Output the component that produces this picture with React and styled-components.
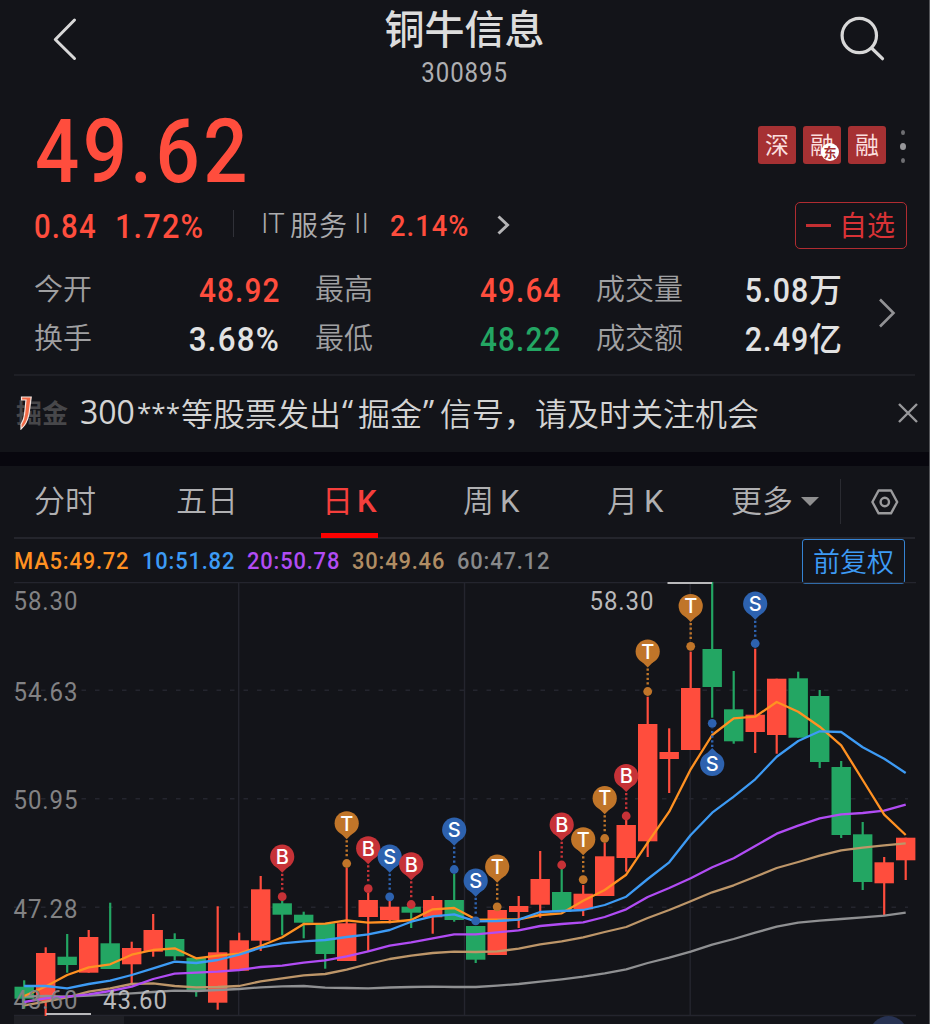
import React from "react";
import styled, { createGlobalStyle } from "styled-components";

const NUM = `Roboto, "Noto Sans CJK SC", sans-serif`;
const CJK = `"Noto Sans CJK SC", sans-serif`;
const RED = "#ff4d3d";
const GREEN = "#23a663";

const Global = createGlobalStyle`
  * { box-sizing: border-box; }
  html, body { margin: 0; padding: 0; background: #131419; overflow: hidden; }
`;

const Screen = styled.main`
  width: 930px;
  height: 1024px;
  display: flex;
  flex-direction: column;
  overflow: hidden;
  background: #131419;
  border-right: 1px solid #55565a;
  color: #dedede;
  font-family: ${CJK};
  white-space: nowrap;
`;

/* Condensed, slightly tracked figures */
const Num = styled.span`
  display: block;
  font-family: ${NUM};
  font-size: ${(p) => p.$size || 33}px;
  font-weight: ${(p) => p.$weight || 500};
  letter-spacing: ${(p) => (p.$track === undefined ? 0.038 : p.$track)}em;
  line-height: 1;
  color: ${(p) => p.$color || "#e2e2e2"};
  transform: scaleX(${(p) => p.$stretch || 0.89});
  transform-origin: ${(p) => p.$from || "left"} center;
`;
const Unit = styled.span`
  display: block;
  font-size: 33px;
  font-weight: 500;
  line-height: 45px;
  height: 50px;
  color: #e2e2e2;
`;

const Header = styled.header`
  height: 96px;
  display: grid;
  grid-template-columns: 200px 1fr 200px;
`;
const BackButton = styled.div`
  padding: 17px 0 0 52px;
`;
const SearchButton = styled.div`
  padding: 16px 0 0 111px;
`;
const TitleBlock = styled.div`
  display: flex;
  flex-direction: column;
  align-items: center;
`;
const Title = styled.h1`
  margin: 0;
  height: 60px;
  font-size: 40px;
  line-height: 55px;
  font-weight: 500;
  color: #dcdcdc;
`;

const PriceRow = styled.section`
  height: 100px;
  display: flex;
  justify-content: space-between;
  padding: 9px 23px 0 34px;
`;
const PriceCell = styled.div`
  padding: 2px 0 0 1px;
`;
const Badges = styled.div`
  display: flex;
  gap: 7px;
  padding-top: 21px;
`;
const Badge = styled.span`
  position: relative;
  width: 38px;
  height: 38px;
  border-radius: 3px;
  background: #a63133;
  color: #fbdede;
  font-size: 24px;
  line-height: 36px;
  text-align: center;
`;
const BadgeDot = styled.span`
  position: absolute;
  right: 2px;
  bottom: 3px;
  width: 18px;
  height: 18px;
  border-radius: 50%;
  background: #fff;
  color: #a63133;
  font-size: 13px;
  font-weight: 700;
  line-height: 17px;
`;
const Dots = styled.span`
  display: flex;
  flex-direction: column;
  align-items: center;
  gap: 8px;
  width: 6px;
  margin-left: 7px;
  padding-top: 4px;
`;
const Dot = styled.i`
  width: ${(p) => p.$d}px;
  height: ${(p) => p.$d + 1}px;
  border-radius: 50%;
  background: ${(p) => p.$c};
`;

const ChangeRow = styled.section`
  height: 66px;
  display: flex;
  align-items: flex-start;
  padding: 5px 22px 0 34px;
`;
const ChangeCell = styled.div`
  height: 50px;
  display: flex;
  align-items: center;
  width: ${(p) => p.$w}px;
`;
const Rule = styled.i`
  width: 1px;
  height: 27px;
  margin-top: 9px;
  background: #303138;
`;
const Sector = styled.div`
  display: flex;
  width: 129px;
  margin-left: 27px;
  height: 48px;
  font-size: 28px;
  line-height: 46px;
  font-weight: 350;
  color: #acacae;
`;
const SectorPart = styled.span`
  width: ${(p) => p.$w}px;
  letter-spacing: ${(p) => p.$track || 0}px;
  font-family: ${(p) => (p.$latin ? NUM : CJK)};
`;
const WatchButton = styled.div`
  margin-left: auto;
  width: 112px;
  height: 47px;
  margin-top: 1px;
  display: flex;
  align-items: center;
  gap: 8px;
  padding-left: 10px;
  border: 1px solid #b02c31;
  border-radius: 5px;
  color: #d93236;
  font-size: 28px;
`;
const WatchText = styled.span`
  height: 46px;
  line-height: 42px;
`;
const Minus = styled.i`
  width: 25px;
  height: 3px;
  background: #c42f32;
`;

const Stats = styled.section`
  display: grid;
  grid-template-columns: 74px 172px 35px 74px 172px 35px 92px 154px 1fr;
  grid-template-rows: 49px 49px;
  height: 112px;
  padding: 3px 0 0 34px;
`;
const StatLabel = styled.span`
  font-size: 29px;
  font-weight: 350;
  line-height: 45px;
  color: #a0a0a2;
`;
const StatValue = styled.span`
  display: flex;
  justify-content: flex-end;
  align-items: center;
  height: 51px;
  padding-right: ${(p) => (p.$unit ? 0 : 0)}px;
`;
const StatsArrow = styled.span`
  grid-column: 9;
  grid-row: 1 / span 2;
  padding: 32px 0 0 36px;
`;

const Notice = styled.section`
  height: 78px;
  margin: 0 14px;
  display: flex;
  align-items: center;
  border-top: 2px solid #1e1f25;
`;
const NoticeLogo = styled.div`
  position: relative;
  width: 66px;
  padding-left: 2px;
  font-size: 26px;
  font-weight: 700;
  line-height: 74px;
  height: 78px;
  color: #47474a;
  svg { position: absolute; left: 5px; top: 21px; }
`;
const NoticePart = styled.span`
  width: ${(p) => p.$w}px;
  font-family: ${(p) => (p.$latin ? `"Open Sans", ${CJK}` : CJK)};
  font-size: ${(p) => p.$size || 32}px;
  font-weight: ${(p) => (p.$latin ? 400 : 350)};
  letter-spacing: ${(p) => p.$track || 0}px;
  line-height: 74px;
  height: 78px;
  color: #d4d4d4;
`;
const CloseButton = styled.span`
  margin-left: auto;
  height: 24px;
  margin-right: -4px;
  svg { display: block; }
`;

const Band = styled.div`
  height: 14px;
  background: #08070e;
`;

const Tabs = styled.nav`
  height: 73px;
  margin: 0 14px;
  padding-left: 20px;
  display: grid;
  grid-template-columns: 142px 145px 142px 144px 124px 109px 1fr;
  border-bottom: 2px solid #24252c;
`;
const Tab = styled.span`
  justify-self: start;
  display: flex;
  gap: 6px;
  font-size: 31px;
  font-weight: 350;
  line-height: 66px;
  height: 72px;
  color: ${(p) => (p.$active ? "#f53f3c" : "#b0b0b2")};
  ${(p) =>
    p.$active &&
    `width: 57px; padding-left: 1px; gap: 4px; font-weight: 400; border-bottom: 5px solid #fb0201;`}
`;
const TabK = styled.span`
  font-family: ${NUM};
  font-size: 31px;
  line-height: 71px;
  font-weight: ${(p) => (p.$active ? 500 : 400)};
`;
const Caret = styled.i`
  margin: 31px 0 0 2px;
  width: 0;
  height: 0;
  border: 9px solid transparent;
  border-top-color: #8f8f90;
  border-bottom: 0;
`;
const TabTools = styled.span`
  display: flex;
  align-items: center;
  height: 71px;
  gap: 30px;
  svg { display: block; }
`;
const ToolRule = styled.i`
  width: 1px;
  height: 45px;
  background: #2a2b31;
`;

const Averages = styled.section`
  height: 43px;
  display: flex;
  align-items: center;
  padding: 2px 24px 0 14px;
`;
const AverageCell = styled.span`
  width: ${(p) => p.$w}px;
`;
const AdjustButton = styled.span`
  margin-left: auto;
  width: 103px;
  height: 45px;
  border: 1.5px solid #3583d2;
  border-radius: 3px;
  color: #3d9bf5;
  font-size: 27px;
  line-height: 41px;
  text-align: center;
  font-weight: 350;
`;

const ChartBox = styled.section`
  height: 442px;
  svg { display: block; }
`;

const STEP = 21.5;
const xAt = (i) => 24.2 + STEP * i;

/* rising flag, body top, body bottom, wick top, wick bottom */
const CANDLES = [
  [0, 986.7, 998.7, 980.3, 1008.7],
  [1, 953, 1001, 947.3, 1016],
  [0, 956.7, 965, 934, 972.7],
  [1, 937, 972.7, 930, 972.7],
  [0, 943.3, 969, 902.7, 969],
  [1, 948, 964.3, 941.7, 984],
  [1, 930, 951.7, 914, 956.7],
  [0, 939, 956.3, 933.3, 960],
  [0, 957.7, 990, 957.7, 996.7],
  [1, 952.3, 1002.7, 906.3, 1009.7],
  [1, 940.3, 970.7, 932.7, 970.7],
  [1, 889.3, 940.7, 876, 951],
  [0, 903.3, 914.7, 900, 935.3],
  [0, 914.7, 922.7, 911.7, 938.3],
  [0, 923.3, 954, 923.3, 968.7],
  [1, 923.3, 961, 868, 961],
  [1, 900, 917, 893, 951.7],
  [1, 906.7, 920, 901, 923.3],
  [0, 906.7, 912.7, 905, 928],
  [1, 900, 917.3, 896, 933.7],
  [0, 900, 920, 874, 921.7],
  [0, 926, 959.7, 926, 963],
  [1, 910, 955, 907, 955],
  [1, 906, 912, 896, 928],
  [1, 879, 904.7, 851, 917.7],
  [0, 892, 912, 869, 912],
  [1, 893.7, 909.3, 885, 916],
  [1, 856.3, 896, 843, 896],
  [1, 825, 858, 820, 871.7],
  [1, 724, 841.3, 696.7, 857],
  [1, 752, 759, 728.3, 793],
  [1, 688, 750, 651.7, 750],
  [0, 649, 687, 582, 717.7],
  [0, 709.3, 741.3, 671, 743.7],
  [1, 714.7, 732, 648.7, 753],
  [1, 678.7, 735, 678.7, 753.7],
  [0, 678.3, 737.7, 671.7, 737.7],
  [0, 696, 762, 690, 768],
  [0, 767, 835, 761, 838],
  [0, 834.3, 882, 822, 890],
  [1, 862.3, 883.3, 857, 915],
  [1, 837.7, 860.3, 837.7, 880],
];

const LINES = [
  ["#8f9092", [996.7, 996, 996.7, 995.7, 994.3, 993.3, 992, 990.7, 991, 990, 989, 987.3, 986.3, 986, 987.7, 988, 988.3, 987.5, 987, 986.7, 987, 987, 985.7, 984, 981.7, 979.3, 976.7, 973.3, 969.3, 963, 957.7, 951.7, 944.7, 939, 932.7, 926.7, 922.7, 920.7, 919, 917.3, 915.7, 912.7]],
  ["#bd9669", [1005.3, 1001.7, 997.3, 991.7, 988.3, 984, 983.3, 986, 987.3, 987, 986, 981.3, 978.3, 975.3, 974, 969.7, 964, 959, 955.7, 953, 951.7, 952, 951.3, 948.7, 944.3, 941.3, 937.3, 932, 927, 918, 910, 901.3, 892.3, 885.3, 876.7, 868, 862, 855.7, 850.3, 847.7, 845.3, 843.3]],
  ["#b14cf4", [1002, 998.3, 996.7, 994.3, 991, 986.7, 979, 973.7, 972.7, 971.7, 970, 967, 965.7, 962.7, 960.3, 956.3, 951.3, 945.7, 942.3, 938.3, 934.3, 934.3, 932.3, 930.3, 926, 924, 922.3, 917, 909.3, 897, 888, 878.3, 867.3, 858.3, 846, 833.7, 825.7, 818.3, 814.3, 813, 810.7, 804.7]],
  ["#ff9122", [996, 986.5, 975, 967.3, 964.3, 954.7, 950, 948.3, 958.3, 955.7, 953.7, 946, 937.3, 924, 923.7, 920.3, 922.7, 922, 920, 909.3, 908, 919.3, 919.7, 919.3, 915, 913.3, 900.7, 890, 874.7, 842.7, 811.7, 769.3, 735, 718.3, 716.7, 702, 711.7, 726.7, 745.3, 780, 814.7, 835]],
  ["#3d9bf5", [986, 986, 988.3, 984, 980.7, 975, 968.3, 961.7, 963, 960, 954.7, 947.7, 943.3, 941.3, 940, 937, 934.3, 930, 921.7, 916.3, 914.3, 921.3, 921, 919.7, 912, 911, 910, 905, 896.7, 879, 862.3, 835, 812.7, 796.7, 779.3, 756.7, 741, 731.3, 732, 747.3, 758.7, 773]],
];

/* candle index, letter, pin centre, anchor dot */
const PINS = [
  [12, "B", 856.7, 896.7],
  [15, "T", 823.3, 863.5],
  [16, "B", 848.3, 888.7],
  [17, "S", 856.7, 896.8],
  [18, "B", 864.3, 904.5],
  [20, "S", 829.7, 869.5],
  [21, "S", 880.7, 920.8],
  [22, "T", 866.7, 906.8],
  [25, "B", 824.7, 865],
  [26, "T", 839.3, 879.6],
  [27, "T", 798.2, 838.5],
  [28, "B", 776, 816],
  [29, "T", 651.5, 691.5],
  [31, "T", 606, 646.3],
  [32, "S", 764, 723.3],
  [34, "S", 603.7, 643.5],
];
const PIN_COLOR = { B: "#c63237", T: "#c07529", S: "#2d62af" };

function Pin({ x, letter, cy, dot }) {
  const c = PIN_COLOR[letter];
  const dir = dot > cy ? 1 : -1;
  return (
    <g>
      <line x1={x} x2={x} y1={cy + dir * 17} y2={dot - dir * 5} stroke={c} strokeWidth="2.4" strokeDasharray="2.2 2.4" />
      <circle cx={x} cy={dot} r="4.4" fill={c} />
      <circle cx={x} cy={cy} r="12.1" fill={c} />
      <path d={`M${x - 6} ${cy + dir * 10} L${x} ${cy + dir * 16} L${x + 6} ${cy + dir * 10}Z`} fill={c} />
      <text x={x} y={cy + 7.2} fontFamily="Inter, sans-serif" fontSize="20" fontWeight="500" fill="#fff" textAnchor="middle">{letter}</text>
    </g>
  );
}

const AXIS = [
  ["58.30", 610],
  ["54.63", 700.5],
  ["50.95", 809],
  ["47.28", 917.5],
  ["43.60", 1008.5],
];

function AxisText({ x, y, children }) {
  return (
    <text transform={`translate(${x} ${y}) scale(0.91 1)`} letterSpacing="1">
      {children}
    </text>
  );
}

function Chart() {
  return (
    <ChartBox>
      <svg width="929" height="442" viewBox="0 582 929 442" fontFamily={NUM}>
        <g stroke="#24252e" strokeWidth="1.4">
          <line x1="14" x2="916" y1="582.6" y2="582.6" />
          <line x1="14" x2="916" y1="1015.5" y2="1015.5" />
          {[238.7, 464.5, 690.2].map((x) => (
            <line key={x} x1={x} x2={x} y1="582" y2="1015" />
          ))}
          {[690.3, 798.7, 907.3].map((y) => (
            <line key={y} x1="14" x2="908" y1={y} y2={y} strokeDasharray="4.5 9" />
          ))}
        </g>
        <rect x="14" y="1016" width="110" height="8" fill="#1f2025" />
        <circle cx="888.5" cy="1035" r="19" fill="#273252" />
        {CANDLES.map(([up, top, bottom, high, low], i) => (
          <g key={i} fill={up ? RED : GREEN}>
            <rect x={xAt(i) - 1.1} y={high} width="2.2" height={low - high} />
            <rect x={xAt(i) - 9.7} y={top} width="19.4" height={bottom - top} />
          </g>
        ))}
        {LINES.map(([color, ys]) => (
          <polyline
            key={color}
            fill="none"
            stroke={color}
            strokeWidth="2.3"
            strokeLinejoin="round"
            points={ys.map((y, i) => `${xAt(i)},${y}`).join(" ")}
          />
        ))}
        <g fontSize="26.4" fontWeight="450" fill="#828284">
          {AXIS.map(([t, y]) => (
            <AxisText key={t} x={13.5} y={y}>{t}</AxisText>
          ))}
        </g>
        <g fontSize="26.4" fontWeight="450" fill="#b9b9bb">
          <AxisText x={589.5} y={610}>58.30</AxisText>
          <AxisText x={103} y={1008.5}>43.60</AxisText>
        </g>
        <g stroke="#b9b9bb" strokeWidth="2">
          <line x1="667.5" x2="712" y1="583" y2="583" />
          <line x1="46" x2="91" y1="1014" y2="1014" />
        </g>
        {PINS.map(([i, letter, cy, dot]) => (
          <Pin key={i} x={xAt(i)} letter={letter} cy={cy} dot={dot} />
        ))}
      </svg>
    </ChartBox>
  );
}

function Stat({ label, value, unit, color, stretch }) {
  return (
    <>
      <StatLabel>{label}</StatLabel>
      <StatValue>
        <Num $color={color} $from="right" $stretch={stretch || 0.9}>{value}</Num>
        {unit && <Unit>{unit}</Unit>}
      </StatValue>
    </>
  );
}

export default function App() {
  return (
    <Screen>
      <Global />
      <Header>
        <BackButton>
          <svg width="28" height="46" viewBox="0 0 28 46" fill="none" stroke="#d8d8d8" strokeWidth="3" strokeLinecap="round" strokeLinejoin="round">
            <path d="M22.5 3 L3.3 22.5 L22.5 41.5" />
          </svg>
        </BackButton>
        <TitleBlock>
          <Title>铜牛信息</Title>
          <Num $size={27} $weight={450} $from="center" $color="#aeafb2">300895</Num>
        </TitleBlock>
        <SearchButton>
          <svg width="46" height="46" viewBox="0 0 46 46" fill="none" stroke="#d8d8d8" strokeWidth="3.2" strokeLinecap="round">
            <circle cx="19.3" cy="19.5" r="17.2" />
            <path d="M32 32.5 L42.5 42.7" />
          </svg>
        </SearchButton>
      </Header>

      <PriceRow>
        <PriceCell>
          <Num $size={89} $track={0.044} $stretch={0.875} $color={RED}>49.62</Num>
        </PriceCell>
        <Badges>
          <Badge>深</Badge>
          <Badge>融<BadgeDot>东</BadgeDot></Badge>
          <Badge>融</Badge>
          <Dots>
            <Dot $d={4} $c="#6e6e72" />
            <Dot $d={6} $c="#97979a" />
            <Dot $d={4} $c="#6e6e72" />
          </Dots>
        </Badges>
      </PriceRow>

      <ChangeRow>
        <ChangeCell $w={81}><Num $color={RED}>0.84</Num></ChangeCell>
        <ChangeCell $w={118}><Num $color={RED} $stretch={0.93}>1.72%</Num></ChangeCell>
        <Rule />
        <Sector>
          <SectorPart $w={29} $latin>IT</SectorPart>
          <SectorPart $w={64} $track={1}>服务</SectorPart>
          <SectorPart $w={30} $latin>II</SectorPart>
        </Sector>
        <ChangeCell $w={107}><Num $size={30} $color={RED} $stretch={0.91}>2.14%</Num></ChangeCell>
        <ChangeCell $w={20}>
          <svg width="16" height="22" viewBox="0 0 16 22" fill="none" stroke="#b4b4b6" strokeWidth="3">
            <path d="M1.5 1.5 L10.5 10 L1.5 18.5" />
          </svg>
        </ChangeCell>
        <WatchButton><Minus /><WatchText>自选</WatchText></WatchButton>
      </ChangeRow>

      <Stats>
        <Stat label="今开" value="48.92" color={RED} /><i />
        <Stat label="最高" value="49.64" color={RED} /><i />
        <Stat label="成交量" value="5.08" unit="万" stretch={0.92} />
        <StatsArrow>
          <svg width="20" height="32" viewBox="0 0 20 32" fill="none" stroke="#929295" strokeWidth="2.6">
            <path d="M2 2.5 L15.5 16 L2 29.5" />
          </svg>
        </StatsArrow>
        <Stat label="换手" value="3.68%" stretch={0.95} /><i />
        <Stat label="最低" value="48.22" color={GREEN} /><i />
        <Stat label="成交额" value="2.49" unit="亿" stretch={0.92} />
      </Stats>

      <Notice>
        <NoticeLogo>
          掘金
          <svg width="16" height="34" viewBox="0 0 16 34">
            <path d="M2.5 1 H12.2 L10 18 Q8 28 2 33 V28.5 Q5 24 5.6 18 L7 4 H2.5Z" fill="#f26a47" stroke="#f7e7e1" strokeWidth="1.2" />
          </svg>
        </NoticeLogo>
        <NoticePart $w={57} $latin>300</NoticePart>
        <NoticePart $w={44} $size={26} $latin>***</NoticePart>
        <NoticePart $w={161}>等股票发出</NoticePart>
        <NoticePart $w={16} $latin>“</NoticePart>
        <NoticePart $w={65}>掘金</NoticePart>
        <NoticePart $w={17} $latin>”</NoticePart>
        <NoticePart $w={95}>信号，</NoticePart>
        <NoticePart $w={224}>请及时关注机会</NoticePart>
        <CloseButton>
          <svg width="22" height="22" viewBox="0 0 22 22" stroke="#98989b" strokeWidth="2.4">
            <path d="M2 2 L20 20 M20 2 L2 20" />
          </svg>
        </CloseButton>
      </Notice>

      <Band />

      <Tabs>
        <Tab>分时</Tab>
        <Tab>五日</Tab>
        <Tab $active>日<TabK $active>K</TabK></Tab>
        <Tab>周<TabK>K</TabK></Tab>
        <Tab>月<TabK>K</TabK></Tab>
        <Tab>更多<Caret /></Tab>
        <TabTools>
          <ToolRule />
          <svg width="30" height="28" viewBox="0 0 30 28" fill="none" stroke="#9b9b9d" strokeWidth="2.4" strokeLinejoin="round">
            <path d="M7.6 2.5 H20 L26.2 14 L20 25.3 H7.6 L1.4 14Z" />
            <circle cx="13.8" cy="14" r="4.2" />
          </svg>
        </TabTools>
      </Tabs>

      <Averages>
        <AverageCell $w={128}><Num $size={24.6} $color="#ff9122">MA5:49.72</Num></AverageCell>
        <AverageCell $w={105}><Num $size={24.6} $color="#3d9bf5">10:51.82</Num></AverageCell>
        <AverageCell $w={105}><Num $size={24.6} $color="#b14cf4">20:50.78</Num></AverageCell>
        <AverageCell $w={105}><Num $size={24.6} $color="#b08d64">30:49.46</Num></AverageCell>
        <AverageCell $w={105}><Num $size={24.6} $color="#88898b">60:47.12</Num></AverageCell>
        <AdjustButton>前复权</AdjustButton>
      </Averages>

      <Chart />
    </Screen>
  );
}
